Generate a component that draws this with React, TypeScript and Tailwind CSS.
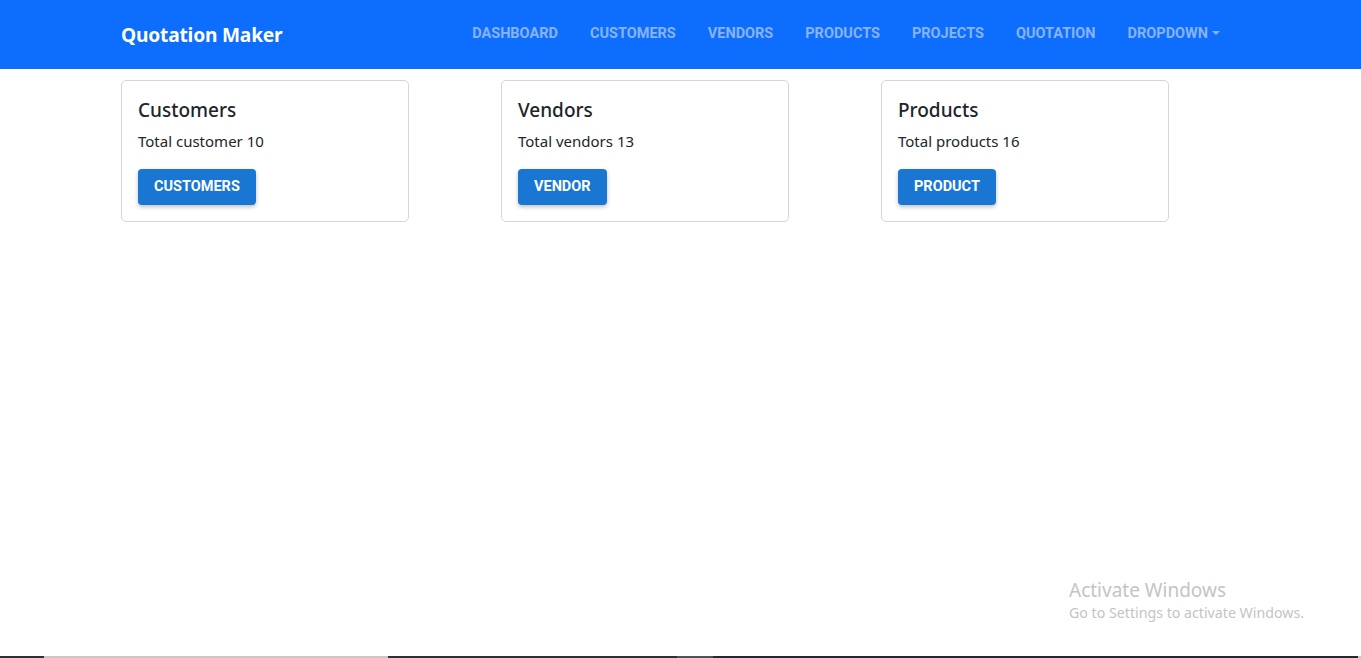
import React from "react";

const navItems = ["DASHBOARD", "CUSTOMERS", "VENDORS", "PRODUCTS", "PROJECTS", "QUOTATION"];

const cards = [
  { title: "Customers", text: "Total customer 10", btn: "CUSTOMERS" },
  { title: "Vendors", text: "Total vendors 13", btn: "VENDOR" },
  { title: "Products", text: "Total products 16", btn: "PRODUCT" },
];

export default function App() {
  return (
    <div className="relative flex h-[658px] w-full flex-col overflow-hidden bg-white">
      <nav className="flex h-[69px] shrink-0 items-center bg-[#0d6efd]">
        <div className="flex w-full items-center pl-[121px] pr-[141px]">
          <span className="text-[19.2px] font-bold leading-none text-white [font-family:'Noto_Sans',sans-serif] tracking-[-0.2px]">
            Quotation Maker
          </span>
          <div className="ml-auto flex items-center pb-[1px] [font-family:Roboto,sans-serif]">
            {navItems.map((n) => (
              <span
                key={n}
                className="px-[16px] text-[14.5px] font-bold leading-none text-[#8ab3fd]"
              >
                {n}
              </span>
            ))}
            <span className="flex items-center pl-[16px] text-[14.5px] font-bold leading-none text-[#8ab3fd]">
              DROPDOWN
              <span className="ml-[4px] mb-[2px] h-0 w-0 border-x-[4px] border-t-[4px] border-x-transparent border-t-[#8ab3fd]" />
            </span>
          </div>
        </div>
      </nav>

      <main className="flex-1 pl-[121px] pt-[11px]">
        <div className="flex">
          {cards.map((c) => (
            <div key={c.title} className="w-[380px]">
              <div className="h-[142px] w-[288px] rounded-[5px] border border-[#d6d6d6] px-[16px] pt-[16px] [font-family:'Noto_Sans',sans-serif] text-[#212529]">
                <div className="text-[19px] font-medium leading-[26px]">{c.title}</div>
                <div className="mt-[8px] text-[15px] leading-[20px]">{c.text}</div>
                <button className="mt-[18px] h-[36px] rounded-[4px] bg-[#1976d2] px-[16px] pt-[1px] text-[14.5px] font-bold leading-none text-white shadow-[0_2px_4px_rgba(0,0,0,0.25)] [font-family:Roboto,sans-serif]">
                  {c.btn}
                </button>
              </div>
            </div>
          ))}
        </div>
      </main>

      <div className="absolute left-[1069px] top-[578px] text-[#c4c4c4] [font-family:'Noto_Sans',sans-serif]">
        <div className="text-[19px] leading-[24px]">Activate Windows</div>
        <div className="text-[14.2px] leading-[21px]">Go to Settings to activate Windows.</div>
      </div>

      <div className="flex h-[2px] shrink-0">
        <div className="w-[44px] bg-[#263238]" />
        <div className="w-[344px] bg-[#c8c8c8]" />
        <div className="w-[289px] bg-[#263238]" />
        <div className="w-[36px] bg-[#4b555c]" />
        <div className="flex-1 bg-[#1e2a35]" />
        <div className="w-[3px] bg-[#c8c8c8]" />
      </div>
    </div>
  );
}
